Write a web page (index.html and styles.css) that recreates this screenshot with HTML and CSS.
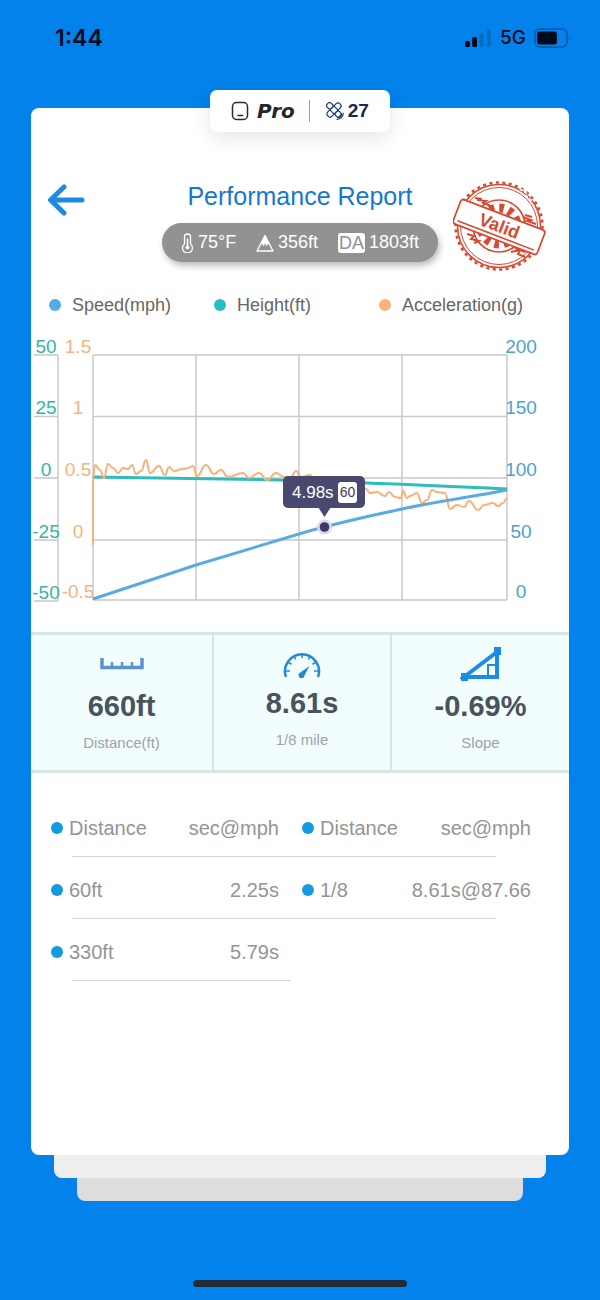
FILE: index.html
```html
<!DOCTYPE html>
<html lang="en">

<head>
    <meta charset="UTF-8">
    <meta name="viewport" content="width=device-width, initial-scale=1.0">
    <title>Performance Report</title>
    <link rel="stylesheet" href="styles.css">
</head>

<body>
    <div class="status-bar">
        <span class="time">1:44</span>
        <div class="status-icons">
            <svg width="27" height="18" viewBox="0 0 27 18">
                <rect x="0" y="12" width="5" height="6" rx="1.500" fill="#000b1c" />
                <rect x="7" y="8" width="5" height="10" rx="1.500" fill="#000b1c" />
                <rect x="14.500" y="4" width="4" height="14" rx="1.500" fill="#0a6cc4" />
                <rect x="22" y="0" width="4" height="18" rx="1.500" fill="#0a6cc4" />
            </svg>
            <span class="network">5G</span>
            <svg width="38" height="20" viewBox="0 0 38 20">
                <rect x="1" y="1" width="32" height="18" rx="5" fill="none" stroke="#0a58a4" stroke-width="1.500" />
                <rect x="3" y="3.500" width="20" height="13" rx="3" fill="#000b1c" />
                <path d="M35.500 7.500q2 2.500 0 5z" fill="#0a58a4" />
            </svg>
        </div>
    </div>

    <main class="card">
        <div class="badge">
            <svg width="18" height="20" viewBox="0 0 18 20" fill="none" stroke="#2b2b2b" stroke-linecap="round">
                <rect x="1.500" y="1.500" width="15" height="17" rx="4" stroke-width="1.500" />
                <path d="M7 14.500h4.500" stroke-width="1.500" />
            </svg>
            <span class="pro">Pro</span>
            <span class="divider"></span>
            <svg width="18" height="18" viewBox="0 0 18 18" fill="none" stroke="#1d3d66" stroke-width="1.200" stroke-linecap="round">
                <g transform="rotate(45 8 8)">
                    <rect x="-1" y="5.200" width="6" height="5.600" rx="2" />
                    <rect x="11" y="5.200" width="6" height="5.600" rx="2" />
                    <rect x="5" y="-.5" width="6" height="17" rx="2.500" />
                    <path d="M5 5.200h6M5 10.800h6" />
                </g>
                <path d="M12 15.200q2.600-.8 3.200-3.200M11 17.300q5.500-.6 6.300-6" />
            </svg>
            <span class="sats">27</span>
        </div>

        <header class="header">
            <button class="back-button" aria-label="Back">
                <svg width="38" height="32" viewBox="0 0 38 32" fill="none" stroke="#1f8ae6" stroke-width="5" stroke-linecap="round" stroke-linejoin="round">
                    <path d="M17 3L3.500 16L17 29M4 16h31" />
                </svg>
            </button>
            <div class="heading">
                <h1>Performance Report</h1>
                <div class="weather">
                    <span class="weather-item">
                        <svg width="13" height="20" viewBox="0 0 13 20" fill="none" stroke="#fff">
                            <path d="M3.500 11V4a3 3 0 0 1 6 0v7a5 5 0 1 1-6 0z" stroke-width="1.300" />
                            <path d="M6.500 5.500v9" stroke-width="1.600" />
                            <circle cx="6.500" cy="14.500" r="2" fill="#fff" stroke="none" />
                        </svg>
                        75°F
                    </span>
                    <span class="weather-item">
                        <svg width="18" height="18" viewBox="0 0 18 18" stroke="#fff" stroke-linejoin="round">
                            <path d="M1 17L9 1.500L17 17z" fill="none" stroke-width="1.300" />
                            <path d="M9 1.500L4.500 10.500L6.500 9.500L7.500 12L9 9L10.500 12L11.500 9.500L13.500 10.500z" fill="#fff" stroke-width=".5" />
                        </svg>
                        356ft
                    </span>
                    <span class="weather-item"><span class="da">DA</span>1803ft</span>
                </div>
            </div>
            <svg class="stamp" width="94" height="94" viewBox="0 0 94 94" fill="none" stroke="#d84a30">
                <circle cx="46" cy="46" r="43.500" stroke-width="2.500" stroke-dasharray="3 3.500" />
                <circle cx="46" cy="46" r="41.500" stroke-width="1.600" />
                <circle cx="46" cy="46" r="38.500" stroke-width="1" />
                <circle cx="46" cy="46" r="26" stroke-width="1.600" />
                <circle cx="46" cy="46" r="18" stroke-width="9" stroke-dasharray="4.500 4.900" />
                <path d="M24 20l9 1l-3 2l8 3M22 18l7 1M70 37l8 3l-4 1l9 3M72 35l7 2M14 54l7 2l-3 3l8 2l-5 2M58 72l9-2l-2 4l7 3M62 68l10 4" stroke-width="2" />
                <path d="M67 9l6 4l-1 2l8 7" stroke="#fff" stroke-width="2" stroke-dasharray="3 2" />
                <g transform="rotate(21 46 47)">
                    <rect x="1" y="34" width="90" height="26" rx="3" fill="#fff" stroke-width="1.800" />
                    <path d="M5 56h82" stroke-width="1.500" />
                    <text class="stamp-text" x="46" y="52" text-anchor="middle">Valid</text>
                </g>
            </svg>
        </header>

        <ul class="legend">
            <li><span class="dot speed"></span>Speed(mph)</li>
            <li><span class="dot height"></span>Height(ft)</li>
            <li><span class="dot accel"></span>Acceleration(g)</li>
        </ul>

        <svg class="chart" viewBox="0 0 538 280">
            <!-- grid -->
            <g class="grid">
                <path d="M62 25H476M62 86.500H476M62 148H476M62 210H476M62 270H476" />
                <path d="M62 25V270M165 25V270M268 25V270M371 25V270M476 25V270" />
                <path d="M27 25V271M3 25H27M3 86.500H27M3 148H27M3 210H27M3 271H27" />
            </g>

            <!-- series -->
            <path class="line-height" d="M62 147C130 148 190 148.500 249 150S400 155.500 476 159" />
            <path class="line-accel" id="accelLine" />
            <path class="line-speed" d="M62 269L165 235L268 204C305 193 335 187 371 179S440 167 476 160" />

            <!-- axis labels -->
            <g class="label-height">
                <text x="15" y="23">50</text>
                <text x="15" y="84">25</text>
                <text x="15" y="146">0</text>
                <text x="15" y="208">-25</text>
                <text x="15" y="269">-50</text>
            </g>
            <g class="label-accel">
                <text x="47" y="23">1.5</text>
                <text x="47" y="84">1</text>
                <text x="47" y="146">0.5</text>
                <text x="47" y="208">0</text>
                <text x="47" y="268">-0.5</text>
            </g>
            <g class="label-speed">
                <text x="490" y="23">200</text>
                <text x="490" y="84">150</text>
                <text x="490" y="146">100</text>
                <text x="490" y="208">50</text>
                <text x="490" y="268">0</text>
            </g>

            <!-- tooltip -->
            <rect x="252" y="146" width="82" height="32" rx="5" fill="#494970" />
            <path d="M287 177h13l-6.500 10z" fill="#494970" />
            <text class="tip-time" x="261" y="168">4.98s</text>
            <rect x="307" y="152" width="19" height="21" rx="3" fill="#fff" />
            <text class="tip-speed" x="316.500" y="167">60</text>
            <circle cx="293.500" cy="197" r="7.500" fill="#d5daf0" />
            <circle cx="293.500" cy="197" r="4.800" fill="#3b3b62" />
        </svg>

        <section class="stats">
            <div class="stat">
                <svg width="44" height="34" viewBox="0 0 44 34" fill="none" stroke="#5b92d0">
                    <path d="M2 11V20.500H42V11" stroke-width="3.500" />
                    <path d="M12 15v5M22 15v5M32 15v5" stroke-width="2.500" />
                </svg>
                <strong>660ft</strong>
                <span>Distance(ft)</span>
            </div>
            <div class="stat">
                <svg width="38" height="31" viewBox="0 0 38 31" fill="none" stroke="#2787d8">
                    <path d="M3 30A17 17 0 1 1 35 30" stroke-width="2.500" />
                    <path d="M3 24h4M31 24h4M5.500 15.500l3 1.700M32.500 15.500l-3 1.700M11 9.500l1.700 2.800M27 9.500l-1.700 2.800M19 7v4" stroke-width="1.600" />
                    <path d="M26.500 19L21.500 28.500A3 3 0 1 1 17.300 25.500z" fill="#2787d8" stroke="none" />
                </svg>
                <strong>8.61s</strong>
                <span>1/8 mile</span>
            </div>
            <div class="stat">
                <svg width="42" height="34" viewBox="0 0 42 34" fill="none" stroke="#1c8be6">
                    <path d="M4 30L37 5V30z" stroke-width="4" />
                    <path d="M28 29V18H36" stroke-width="2" />
                    <path d="M1 26h7v8h-7zM34 0h7v8h-7z" fill="#1c8be6" stroke="none" />
                </svg>
                <strong>-0.69%</strong>
                <span>Slope</span>
            </div>
        </section>

        <table class="results">
            <thead>
                <tr>
                    <th><span class="dot"></span>Distance</th>
                    <th>sec@mph</th>
                    <th><span class="dot"></span>Distance</th>
                    <th>sec@mph</th>
                </tr>
            </thead>
            <tbody>
                <tr>
                    <td><span class="dot"></span>60ft</td>
                    <td>2.25s</td>
                    <td><span class="dot"></span>1/8</td>
                    <td>8.61s@87.66</td>
                </tr>
                <tr class="half">
                    <td><span class="dot"></span>330ft</td>
                    <td>5.79s</td>
                    <td></td>
                    <td></td>
                </tr>
            </tbody>
        </table>
    </main>

    <div class="sheet sheet-1"></div>
    <div class="sheet sheet-2"></div>

    <footer class="home">
        <div class="home-bar"></div>
    </footer>

    <script src="script.js"></script>
</body>

</html>
```

FILE: styles.css
```css
* {
    box-sizing: border-box;
}

body {
    margin: 0;
    min-height: 100vh;
    display: flex;
    flex-direction: column;
    background-color: #0282ea;
    font-family: "Liberation Sans", Arial, sans-serif;
}

svg {
    display: block;
}

/* status bar */
.status-bar {
    height: 90px;
    padding: 24px 28px 0 55px;
    display: flex;
    justify-content: space-between;
    align-items: flex-start;
    color: #000b1c;
    font-family: Inter, sans-serif;
}

.time {
    font-size: 23px;
    line-height: 28px;
    font-weight: 600;
}

.status-icons {
    height: 28px;
    display: flex;
    align-items: center;
    gap: 8px;
}

.network {
    font-size: 19px;
    line-height: 28px;
    font-weight: 500;
}

/* card */
.card {
    flex: 1;
    margin: 18px 31px 0;
    border-radius: 8px;
    background-color: #fff;
}

.badge {
    width: 180px;
    height: 42px;
    margin: -18px auto 0;
    display: flex;
    align-items: center;
    justify-content: center;
    border-radius: 7px;
    background-color: #fff;
    box-shadow: 0 6px 20px rgba(0, 0, 0, 0.1);
}

.pro {
    margin-left: 8px;
    font-family: "DejaVu Sans", sans-serif;
    font-size: 20px;
    font-weight: bold;
    font-style: italic;
    color: #262626;
}

.divider {
    width: 1px;
    height: 22px;
    margin: 0 16px 0 14px;
    background-color: #999;
}

.sats {
    margin-left: 4px;
    font-size: 19px;
    font-weight: bold;
    color: #12275a;
}

.header {
    padding: 48px 22px 0 16px;
    display: flex;
    justify-content: space-between;
    align-items: flex-start;
}

.back-button {
    width: 100px;
    padding: 4px 0;
    border: none;
    background: none;
    cursor: pointer;
}

.heading {
    display: flex;
    flex-direction: column;
    align-items: center;
}

.heading h1 {
    margin: 0 0 11px;
    font-size: 25px;
    line-height: 32px;
    font-weight: normal;
    color: #1678cc;
}

.weather {
    width: 276px;
    height: 39px;
    padding: 0 19px;
    display: flex;
    align-items: center;
    justify-content: space-between;
    border-radius: 20px;
    background-color: #929292;
    box-shadow: 2px 4px 6px rgba(0, 0, 0, 0.25);
    color: #fff;
    font-size: 18px;
}

.weather-item {
    display: flex;
    align-items: center;
    gap: 4px;
}

.da {
    padding: 0 1px;
    border-radius: 3px;
    line-height: 20px;
    background-color: #fff;
    color: #929292;
}

.stamp-text {
    font-size: 18px;
    font-weight: bold;
    fill: #d84a30;
    stroke: none;
}

/* chart */
.legend {
    margin: 0;
    padding: 19px 25px 0 18px;
    display: grid;
    grid-template-columns: repeat(3, 1fr);
    list-style: none;
    font-size: 18px;
    line-height: 24px;
    color: #666;
}

.legend li {
    display: flex;
    align-items: center;
    gap: 11px;
}

.dot {
    width: 12px;
    height: 12px;
    border-radius: 50%;
    background-color: #149bdf;
}

.dot.speed {
    background-color: #55aae8;
}

.dot.height {
    background-color: #26bfc4;
}

.dot.accel {
    background-color: #f8b47a;
}

.chart {
    width: 100%;
    margin-top: 13px;
    font-size: 19px;
}

.grid path {
    fill: none;
    stroke: #c9c9c9;
    stroke-width: 1.5;
}

.line-accel,
.line-height,
.line-speed {
    fill: none;
    stroke-width: 3;
}

.line-accel {
    stroke: #f6b27b;
    stroke-width: 2;
}

.line-height {
    stroke: #2fbcbc;
}

.line-speed {
    stroke: #5aabe0;
}

.label-height,
.label-accel,
.label-speed {
    text-anchor: middle;
}

.label-height {
    fill: #35b5a8;
}

.label-accel {
    fill: #f2b480;
}

.label-speed {
    fill: #4da3cc;
}

.tip-time {
    font-size: 17px;
    fill: #fff;
}

.tip-speed {
    font-size: 14px;
    text-anchor: middle;
    fill: #3b3b62;
}

/* stats */
.stats {
    margin-top: 22px;
    display: grid;
    grid-template-columns: 1fr 178px 179px;
    border-top: 3px solid #d6e5e6;
    border-bottom: 3px solid #d6e5e6;
    background-color: #f2fdfe;
}

.stat {
    height: 135px;
    padding-top: 12px;
    display: flex;
    flex-direction: column;
    align-items: center;
}

.stat + .stat {
    border-left: 2px solid #d6e5e6;
}

.stat strong {
    margin: 8px 0;
    font-size: 29px;
    line-height: 34px;
    color: #48535e;
}

.stat span {
    font-size: 15px;
    line-height: 24px;
    color: #a0a3a5;
}

/* results */
.results {
    width: calc(100% - 58px);
    margin: 22px 38px 0 20px;
    border-collapse: collapse;
    table-layout: fixed;
    font-size: 20px;
    color: #949494;
}

.results tr {
    position: relative;
    height: 62px;
}

.results th,
.results td {
    padding: 4px 0 0;
    font-weight: normal;
    text-align: left;
    white-space: nowrap;
}

.results .dot {
    display: inline-block;
    margin-right: 6px;
    vertical-align: 1px;
}

.results tr > :nth-child(2) {
    padding-right: 12px;
    text-align: right;
}

.results tr > :nth-child(3) {
    padding-left: 11px;
}

.results tr > :nth-child(4) {
    text-align: right;
}

/* row line */
.results tr > :first-child::after {
    content: "";
    position: absolute;
    left: 21px;
    right: 35px;
    bottom: 0;
    height: 1px;
    background-color: #d5d5d5;
}

.results .half > :first-child::after {
    right: 50%;
}

/* sheets under the card */
.sheet {
    height: 23px;
    border-radius: 0 0 8px 8px;
}

.sheet-1 {
    margin: 0 54px;
    background-color: #eee;
}

.sheet-2 {
    margin: 0 77px;
    background-color: #ddd;
}

.home {
    height: 99px;
    padding-bottom: 13px;
    display: flex;
    align-items: flex-end;
    justify-content: center;
}

.home-bar {
    width: 214px;
    height: 7px;
    border-radius: 4px;
    background-color: #222c38;
}
```

FILE: script.js
```js
// acceleration samples in chart coordinates
const accelPoints = [
    [62, 148], [64, 135], [69, 140], [73, 148], [77, 134], [82, 138], [87, 143], [92, 138],
    [97, 139], [101, 135], [105, 144], [110, 141], [115, 130], [119, 143], [128, 136], [134, 145],
    [138, 137], [143, 141], [152, 139], [157, 138], [162, 136], [166, 146], [175, 135], [183, 144],
    [190, 140], [197, 147], [212, 143], [218, 148], [228, 143], [236, 150], [245, 143], [253, 147],
    [260, 147], [265, 141], [270, 147], [279, 145], [284, 152], [300, 158], [320, 154], [335, 159],
    [339, 163], [346, 162], [354, 166], [358, 162], [364, 167], [370, 168], [372, 161], [376, 168],
    [379, 166], [386, 163], [391, 173], [396, 170], [401, 160], [406, 162], [414, 163], [419, 179],
    [426, 175], [433, 177], [438, 171], [447, 180], [453, 175], [462, 173], [467, 176], [472, 173],
    [476, 168]
];

// start at 0g, then curve between the samples
let d = "M62 215V148";
for (let i = 1; i < accelPoints.length; i++) {
    const [x0, y0] = accelPoints[i - 1];
    const [x1, y1] = accelPoints[i];
    const mid = (x0 + x1) / 2;
    d += `C${mid} ${y0} ${mid} ${y1} ${x1} ${y1}`;
}
document.getElementById("accelLine").setAttribute("d", d);
```
